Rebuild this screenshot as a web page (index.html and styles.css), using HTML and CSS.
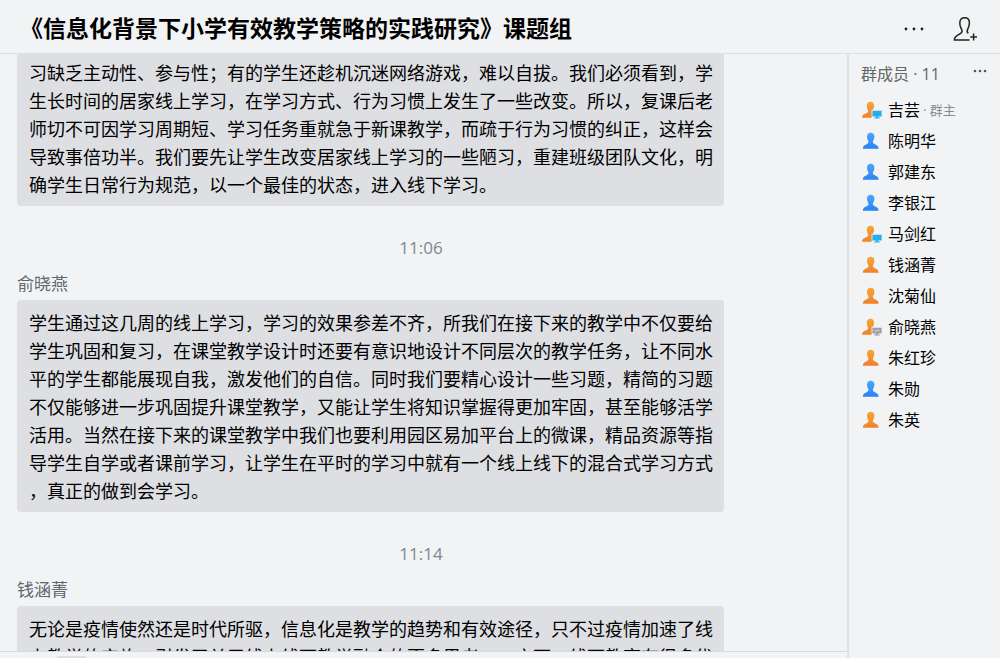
FILE: index.html
```html
<!DOCTYPE html>
<html lang="zh-CN">
<head>
    <meta charset="UTF-8">
    <meta name="viewport" content="width=device-width, initial-scale=1.0">
    <title>课题组</title>
    <link rel="stylesheet" href="styles.css">
</head>
<body>
    <svg class="sprite" aria-hidden="true">
        <defs>
            <linearGradient id="orange" x1="0" y1="0" x2="0" y2="1">
                <stop offset="0" stop-color="#f7a63a"/>
                <stop offset="1" stop-color="#f0802c"/>
            </linearGradient>
            <linearGradient id="blue" x1="0" y1="0" x2="0" y2="1">
                <stop offset="0" stop-color="#4aa6fb"/>
                <stop offset="1" stop-color="#2a83f3"/>
            </linearGradient>
            <symbol id="person" viewBox="0 0 20 18">
                <path d="M8.7 0.8C11.2 0.8 12.5 2.6 12.4 5.2C12.3 7.2 11.2 8.4 10.9 9.6C10.8 11 11.4 11.6 12.8 12.2C15 13.2 16.4 13.8 16.6 16.8H0.8C1 13.8 2.4 13.2 4.6 12.2C6 11.6 6.6 11 6.5 9.6C6.2 8.4 5.1 7.2 5 5.2C4.9 2.6 6.2 0.8 8.7 0.8Z"/>
            </symbol>
            <symbol id="person-cut" viewBox="0 0 20 18">
                <path d="M8.5 0.8C11 0.8 12.2 2.6 12.1 5.2C12 7.2 11 8 10.6 9H9.6V16.8H0C0.2 13.9 1.8 13.2 4.2 12.2C5.8 11.5 6.3 10.8 6.1 9.4C5.6 8.4 4.9 7.2 4.8 5.2C4.7 2.6 6 0.8 8.5 0.8Z"/>
            </symbol>
            <symbol id="monitor" viewBox="0 0 20 18">
                <path d="M10.4 9.8H19.6V15.4H16V16.6H17.8V17.6H12.2V16.6H14V15.4H10.4Z"/>
            </symbol>
        </defs>
    </svg>

    <div class="window">
        <header class="topbar">
            <h1>《信息化背景下小学有效教学策略的实践研究》课题组</h1>
            <button class="icon-button" aria-label="更多">
                <svg width="20" height="4" viewBox="0 0 20 4"><circle cx="2" cy="2" r="1.4"/><circle cx="10" cy="2" r="1.4"/><circle cx="18" cy="2" r="1.4"/></svg>
            </button>
            <button class="icon-button" aria-label="添加成员">
                <svg width="26" height="26" viewBox="0 0 26 26">
                    <path class="line" d="M17.6 24H2.4C2.2 20.9 4.6 19.6 7.4 18.2C10.4 16.8 10.6 15 9.4 13C8.2 11 7.8 9.4 7.8 7C7.8 3.4 9.6 1.8 12.6 1.8C15.6 1.8 17.4 3.4 17.4 7C17.4 9.4 17 11 15.8 13C14.8 14.8 14.9 16.2 16.4 17.2"/>
                    <path class="line" d="M21.6 17.6V24.4M18.2 21H25"/>
                </svg>
            </button>
        </header>

        <div class="content">
            <main class="chat">
                <div class="messages">
                    <p class="bubble bubble-scrolled">习缺乏主动性、参与性；有的学生还趁机沉迷网络游戏，难以自拔。我们必须看到，学生长时间的居家线上学习，在学习方式、行为习惯上发生了一些改变。所以，复课后老师切不可因学习周期短、学习任务重就急于新课教学，而疏于行为习惯的纠正，这样会导致事倍功半。我们要先让学生改变居家线上学习的一些陋习，重建班级团队文化，明确学生日常行为规范，以一个最佳的状态，进入线下学习。</p>

                    <time class="time">11:06</time>
                    <div class="sender">俞晓燕</div>
                    <p class="bubble">学生通过这几周的线上学习，学习的效果参差不齐，所我们在接下来的教学中不仅要给学生巩固和复习，在课堂教学设计时还要有意识地设计不同层次的教学任务，让不同水平的学生都能展现自我，激发他们的自信。同时我们要精心设计一些习题，精简的习题不仅能够进一步巩固提升课堂教学，又能让学生将知识掌握得更加牢固，甚至能够活学活用。当然在接下来的课堂教学中我们也要利用园区易加平台上的微课，精品资源等指导学生自学或者课前学习，让学生在平时的学习中就有一个线上线下的混合式学习方式，真正的做到会学习。</p>

                    <time class="time">11:14</time>
                    <div class="sender">钱涵菁</div>
                    <p class="bubble">无论是疫情使然还是时代所驱，信息化是教学的趋势和有效途径，只不过疫情加速了线上教学的实施，引发了关于线上线下教学融合的更多思考。一方面，线下教育有很多优</p>
                </div>
                <div class="composer"><span class="composer-tab"></span></div>
            </main>

            <aside class="members">
                <div class="members-head">
                    <h2>群成员 · 11</h2>
                    <button class="icon-button" aria-label="成员选项">
                        <svg width="14" height="4" viewBox="0 0 14 4"><circle cx="2" cy="2" r="1.3"/><circle cx="7" cy="2" r="1.3"/><circle cx="12" cy="2" r="1.3"/></svg>
                    </button>
                </div>
                <ul>
                    <li><svg class="avatar orange"><use href="#person-cut"/><use class="online" href="#monitor"/></svg>吉芸<span class="role">· 群主</span></li>
                    <li><svg class="avatar blue"><use href="#person"/></svg>陈明华</li>
                    <li><svg class="avatar blue"><use href="#person"/></svg>郭建东</li>
                    <li><svg class="avatar blue"><use href="#person"/></svg>李银江</li>
                    <li><svg class="avatar orange"><use href="#person-cut"/><use class="online" href="#monitor"/></svg>马剑红</li>
                    <li><svg class="avatar orange"><use href="#person"/></svg>钱涵菁</li>
                    <li><svg class="avatar orange"><use href="#person"/></svg>沈菊仙</li>
                    <li><svg class="avatar orange"><use href="#person-cut"/><use class="away" href="#monitor"/><path class="away-mark" d="M12.4 12.2L14.2 13.4L15.8 11.8L17.6 13"/></svg>俞晓燕</li>
                    <li><svg class="avatar orange"><use href="#person"/></svg>朱红珍</li>
                    <li><svg class="avatar blue"><use href="#person"/></svg>朱勋</li>
                    <li><svg class="avatar orange"><use href="#person"/></svg>朱英</li>
                </ul>
            </aside>
        </div>
    </div>
</body>
</html>
```

FILE: styles.css
```css
* {
    box-sizing: border-box;
}
body {
    margin: 0;
    background: #f1f3f5;
    color: #000;
    font-family: "Noto Sans CJK SC", sans-serif;
    text-spacing-trim: space-all;
}
h1, h2, p, ul {
    margin: 0;
    padding: 0;
}
.sprite {
    position: absolute;
    width: 0;
    height: 0;
}
.window {
    display: flex;
    flex-direction: column;
    height: 100vh;
    overflow: hidden;
}
.topbar {
    display: flex;
    align-items: center;
    gap: 28px;
    height: 54px;
    flex: none;
    padding: 4px 22px 0 20px;
    border-bottom: 1px solid #dedfe1;
}
.topbar h1 {
    flex: 1;
    padding-bottom: 4px;
    font-size: 23px;
    line-height: 32px;
    font-weight: 700;
    white-space: nowrap;
}
.icon-button {
    display: flex;
    padding: 0;
    border: none;
    background: none;
    color: #222;
    fill: currentColor;
    cursor: pointer;
}
.line {
    fill: none;
    stroke: #222;
    stroke-width: 1.5;
}
.content {
    display: flex;
    flex: 1;
    min-height: 0;
}
.chat {
    display: flex;
    flex-direction: column;
    flex: 1;
    min-width: 0;
}
.messages {
    display: flex;
    flex-direction: column;
    flex: 1;
    min-height: 0;
    overflow: hidden;
    padding: 0 123px 0 17px;
}
.bubble {
    flex: none;
    padding: 8px 11px 8px 12px;
    border-radius: 4px;
    background: #dedfe3;
    font-size: 18px;
    line-height: 28px;
    line-break: anywhere;
}
.bubble-scrolled {
    padding-top: 4px;
    border-radius: 0 0 4px 4px;
}
.time {
    margin: 30px 0 11px;
    padding-left: 101px;
    color: #7f8896;
    font-family: "Open Sans", sans-serif;
    font-size: 17px;
    line-height: 24px;
    text-align: center;
}
.sender {
    margin-bottom: 5px;
    color: #5f6670;
    font-size: 17px;
    line-height: 24px;
}
.composer {
    flex: none;
    height: 7px;
    padding: 4px 0 0 57px;
    border-top: 1px solid #d8dadd;
}
.composer-tab {
    display: block;
    width: 29px;
    height: 2px;
    background: #dedfe3;
}
.members {
    width: 153px;
    border-left: 2px solid #dfe1e4;
    padding: 8px 13px 0 12px;
    font-family: "Open Sans", "Noto Sans CJK SC", sans-serif;
}
.members-head {
    display: flex;
    justify-content: space-between;
    margin-bottom: 8px;
    color: #666;
}
.members-head h2 {
    font-size: 16px;
    line-height: 24px;
    font-weight: 400;
}
.members-head .icon-button {
    color: #555;
    padding-top: 7px;
    align-self: flex-start;
}
.members ul {
    list-style: none;
}
.members li {
    display: flex;
    align-items: center;
    height: 31px;
    font-size: 16px;
    line-height: 24px;
    white-space: nowrap;
}
.avatar {
    width: 20px;
    height: 18px;
    margin: 0 6px 0 1px;
    flex: none;
}
.orange {
    fill: url(#orange);
}
.blue {
    fill: url(#blue);
}
.online {
    fill: #22aef0;
}
.away {
    fill: #9c9fa3;
}
.away-mark {
    fill: none;
    stroke: #e4e5e7;
}
.role {
    margin-left: 3px;
    color: #858c96;
    font-size: 13px;
}
```
